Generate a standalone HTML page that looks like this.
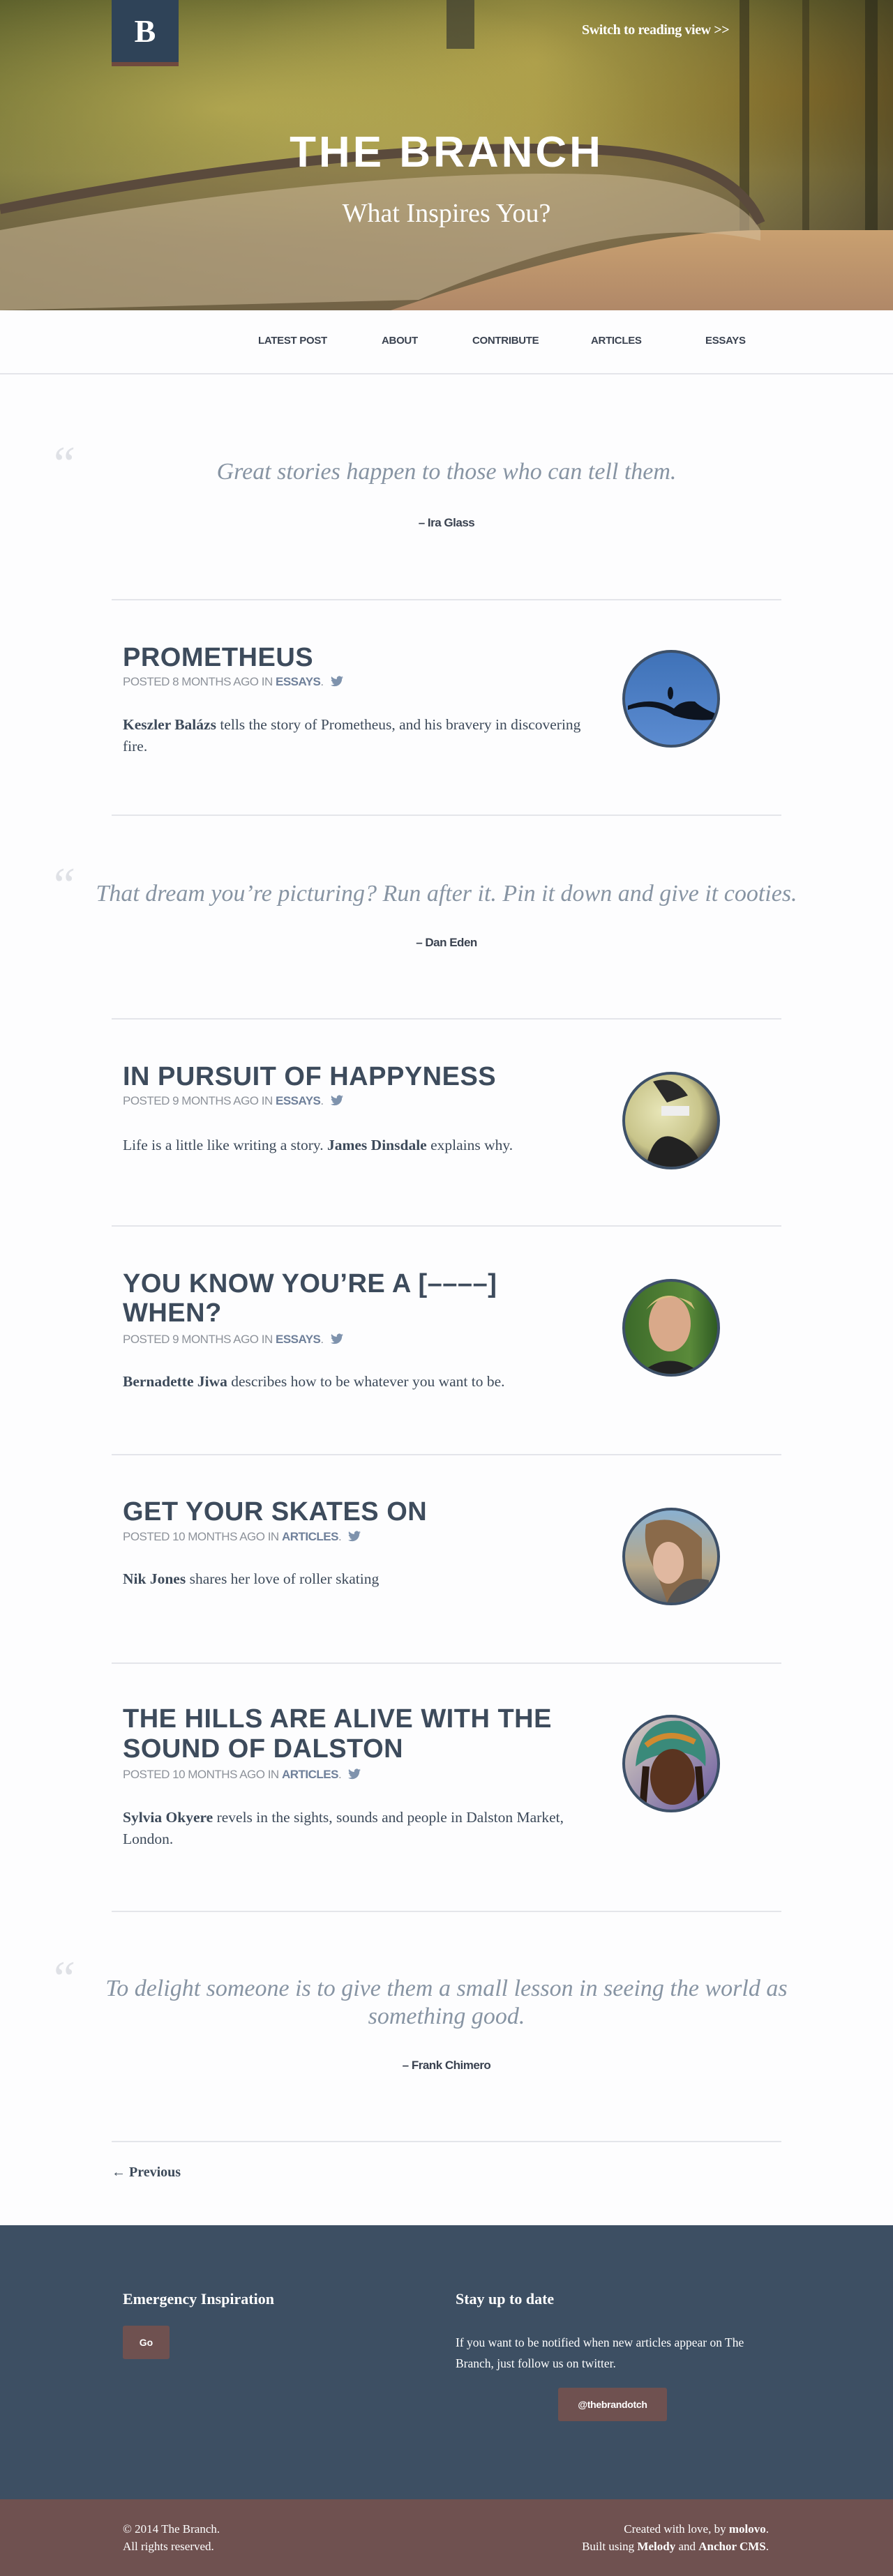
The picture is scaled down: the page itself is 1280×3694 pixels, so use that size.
<!DOCTYPE html>
<html><head><meta charset="utf-8">
<style>
*{margin:0;padding:0;box-sizing:border-box}
body{width:1280px;height:3694px;position:relative;background:#fdfdfe;font-family:"Liberation Serif",serif;color:#3d4a5a;overflow:hidden}
.a{position:absolute}
.hero{left:0;top:0;width:1280px;height:445px;overflow:hidden;
background:radial-gradient(ellipse at 25% 35%,#c9b95a 0%,rgba(180,160,70,0) 45%),radial-gradient(ellipse at 60% 20%,#a89a48 0%,rgba(150,140,60,0) 40%),radial-gradient(ellipse at 90% 30%,#b08a30 0%,rgba(120,100,40,0) 35%),linear-gradient(180deg,#6a6a30 0%,#8f8a42 30%,#a89a58 55%,#8c7a52 80%,#7b6a4c 100%)}
.hr{position:absolute;left:160px;width:960px;height:2px;background:#e4e5ea}
.t{position:absolute;left:176px;font-family:"Liberation Sans",sans-serif;font-weight:bold;font-size:38px;line-height:42px;letter-spacing:0.5px;color:#3d4b5c;text-transform:uppercase}
.m{position:absolute;left:176px;font-family:"Liberation Sans",sans-serif;font-size:17px;line-height:22px;color:#8d929a;letter-spacing:-0.5px}
.m b{color:#6f809a}
.m svg{vertical-align:-2px;margin-left:10px}
.p{position:absolute;left:176px;width:660px;font-size:21.5px;line-height:31px;color:#3d4a5a}
.av{position:absolute;width:140px;height:140px;border-radius:50%;border:4px solid #3d5068;overflow:hidden}
.q{position:absolute;left:140px;width:1000px;text-align:center;font-family:"Liberation Serif",serif;font-style:italic;font-size:34px;line-height:40px;color:#8794a3}
.qm{position:absolute;left:70px;font-family:"Liberation Serif",serif;font-style:italic;font-size:70px;color:#dfe1e6;line-height:60px}
.att{position:absolute;left:0;width:1280px;text-align:center;font-family:"Liberation Sans",sans-serif;font-weight:bold;font-size:17px;color:#3a4250;letter-spacing:-0.5px}
.nav{font-family:"Liberation Sans",sans-serif;font-weight:bold;font-size:15px;color:#3a4250;top:480px;letter-spacing:-0.3px}
</style></head><body>
<div class="a hero">
<svg width="1280" height="445" style="position:absolute;left:0;top:0">
<defs><linearGradient id="dk" x1="0" x2="1"><stop offset="0" stop-color="#4a5326" stop-opacity=".4"/><stop offset=".6" stop-color="#6b6e33" stop-opacity="0"/><stop offset="1" stop-color="#2e2a1a" stop-opacity=".6"/></linearGradient>
<linearGradient id="dk2" x1="0" y1="0" x2="0" y2="1"><stop offset="0" stop-color="#c9a070"/><stop offset="1" stop-color="#b08868"/></linearGradient></defs>
<rect width="1280" height="445" fill="url(#dk)"/>
<rect x="1060" y="0" width="14" height="380" fill="#2f2b1c" opacity=".6"/>
<rect x="1150" y="0" width="10" height="380" fill="#2f2b1c" opacity=".5"/>
<rect x="1240" y="0" width="18" height="400" fill="#2a2a1a" opacity=".6"/>
<rect x="640" y="0" width="40" height="70" fill="#3a3a30" opacity=".7"/>
<path d="M0 300 Q500 200 860 215 Q1050 225 1090 320 L1090 400 L1280 400 L1280 445 L0 445Z" fill="#6d5a44" opacity=".45"/>
<path d="M560 445 Q900 330 1090 330 L1280 330 L1280 445Z" fill="url(#dk2)"/>
<path d="M0 300 Q500 200 860 215 Q1050 225 1090 320" stroke="#5a4a3c" stroke-width="14" fill="none"/>
<path d="M0 330 Q500 240 860 250 Q1050 260 1090 330 L1090 345 Q900 300 600 430 L0 445Z" fill="#d5c2a0" opacity=".5"/>
</svg>
<div class="a" style="left:160px;top:0;width:96px;height:89px;background:#2f4358;color:#fff;font:bold 46px 'Liberation Serif',serif;text-align:center;line-height:89px">B</div>
<div class="a" style="left:160px;top:89px;width:96px;height:6px;background:#6f4a3e"></div>
<div class="a" style="left:834px;top:32px;color:#fff;font:bold 20px 'Liberation Serif',serif;letter-spacing:-0.4px">Switch to reading view &gt;&gt;</div>
<div class="a" style="left:0;top:182px;width:1280px;text-align:center;color:#fff;font:bold 62px 'Liberation Sans',sans-serif;letter-spacing:4px;line-height:74px">THE BRANCH</div>
<div class="a" style="left:0;top:284px;width:1280px;text-align:center;color:#fff;font:38px 'Liberation Serif',serif;line-height:44px">What Inspires You?</div>
</div>
<div class="a" style="left:0;top:535px;width:1280px;height:2px;background:#e4e5ea"></div>
<div class="a nav" style="left:370px">LATEST POST</div>
<div class="a nav" style="left:547px">ABOUT</div>
<div class="a nav" style="left:677px">CONTRIBUTE</div>
<div class="a nav" style="left:847px">ARTICLES</div>
<div class="a nav" style="left:1011px">ESSAYS</div>

<div class="qm" style="top:636px">“</div>
<div class="q" style="top:657px">Great stories happen to those who can tell them.</div>
<div class="att" style="top:740px">– Ira Glass</div>
<div class="hr" style="top:859px"></div>

<div class="t" style="top:922px">Prometheus</div>
<div class="m" style="top:967px">POSTED 8 MONTHS AGO IN <b>ESSAYS</b>.<svg width="18" height="16" viewBox="0 0 24 20"><path fill="#7f93ad" d="M24 2.4a9.8 9.8 0 0 1-2.8.8A4.9 4.9 0 0 0 23.3.4a9.9 9.9 0 0 1-3.1 1.2A4.9 4.9 0 0 0 11.8 6 14 14 0 0 1 1.7.9a4.9 4.9 0 0 0 1.500 6.6A4.9 4.9 0 0 1 1 6.9a4.9 4.9 0 0 0 3.9 4.9 4.9 4.9 0 0 1-2.2.1 4.9 4.9 0 0 0 4.6 3.4A9.9 9.9 0 0 1 0 17.3 14 14 0 0 0 7.5 19.5c9.1 0 14-7.5 14-14v-.6A10 10 0 0 0 24 2.4z"/></svg></div>
<div class="p" style="top:1024px"><b>Keszler Balázs</b> tells the story of Prometheus, and his bravery in discovering fire.</div>
<div class="av" style="left:892px;top:932px;background:linear-gradient(#3f72b8,#5b8bd0)"><svg width="132" height="132"><path d="M4 82 Q40 70 70 90 Q100 100 132 95 L132 88 Q110 80 100 70 Q80 68 70 80 Q40 62 4 76Z" fill="#0d1420"/><ellipse cx="65" cy="58" rx="4" ry="9" fill="#0d1420"/></svg></div>
<div class="hr" style="top:1168px"></div>

<div class="qm" style="top:1240px">“</div>
<div class="q" style="top:1262px;left:110px;width:1060px">That dream you’re picturing? Run after it. Pin it down and give it cooties.</div>
<div class="att" style="top:1342px">– Dan Eden</div>
<div class="hr" style="top:1460px"></div>

<div class="t" style="top:1523px">In Pursuit of Happyness</div>
<div class="m" style="top:1568px">POSTED 9 MONTHS AGO IN <b>ESSAYS</b>.<svg width="18" height="16" viewBox="0 0 24 20"><path fill="#7f93ad" d="M24 2.4a9.8 9.8 0 0 1-2.8.8A4.9 4.9 0 0 0 23.3.4a9.9 9.9 0 0 1-3.1 1.2A4.9 4.9 0 0 0 11.8 6 14 14 0 0 1 1.7.9a4.9 4.9 0 0 0 1.5 6.6A4.9 4.9 0 0 1 1 6.9a4.9 4.9 0 0 0 3.9 4.9 4.9 4.9 0 0 1-2.2.1 4.9 4.9 0 0 0 4.6 3.4A9.9 9.9 0 0 1 0 17.3 14 14 0 0 0 7.5 19.5c9.1 0 14-7.5 14-14v-.6A10 10 0 0 0 24 2.4z"/></svg></div>
<div class="p" style="top:1627px">Life is a little like writing a story. <b>James Dinsdale</b> explains why.</div>
<div class="av" style="left:892px;top:1537px;background:radial-gradient(circle at 40% 40%,#e8e6b8,#c8c48a 50%,#3a3530 80%)"><svg width="132" height="132"><path d="M30 132 Q40 80 70 90 Q100 100 110 132Z" fill="#222"/><rect x="52" y="45" width="40" height="14" fill="#eee"/><path d="M40 10 Q70 0 90 30 L60 40Z" fill="#2a2a2a"/></svg></div>
<div class="hr" style="top:1757px"></div>

<div class="t" style="top:1820px">You know you’re a [––––]</div>
<div class="t" style="top:1862px">When?</div>
<div class="m" style="top:1910px">POSTED 9 MONTHS AGO IN <b>ESSAYS</b>.<svg width="18" height="16" viewBox="0 0 24 20"><path fill="#7f93ad" d="M24 2.4a9.8 9.8 0 0 1-2.8.8A4.9 4.9 0 0 0 23.3.4a9.9 9.9 0 0 1-3.1 1.2A4.9 4.9 0 0 0 11.8 6 14 14 0 0 1 1.7.9a4.9 4.9 0 0 0 1.5 6.6A4.9 4.9 0 0 1 1 6.9a4.9 4.9 0 0 0 3.9 4.9 4.9 4.9 0 0 1-2.2.1 4.9 4.9 0 0 0 4.6 3.4A9.9 9.9 0 0 1 0 17.3 14 14 0 0 0 7.5 19.5c9.1 0 14-7.5 14-14v-.6A10 10 0 0 0 24 2.4z"/></svg></div>
<div class="p" style="top:1966px"><b>Bernadette Jiwa</b> describes how to be whatever you want to be.</div>
<div class="av" style="left:892px;top:1834px;background:linear-gradient(90deg,#3c6a2a,#5a8a3a 70%,#2e5a22)"><svg width="132" height="132"><ellipse cx="64" cy="60" rx="30" ry="40" fill="#d9a98a"/><path d="M30 40 Q60 0 100 40 L95 30 Q60 10 30 40Z" fill="#d8c080"/><path d="M20 132 Q64 95 110 132Z" fill="#222"/></svg></div>
<div class="hr" style="top:2085px"></div>

<div class="t" style="top:2147px">Get your skates on</div>
<div class="m" style="top:2193px">POSTED 10 MONTHS AGO IN <b>ARTICLES</b>.<svg width="18" height="16" viewBox="0 0 24 20"><path fill="#7f93ad" d="M24 2.4a9.8 9.8 0 0 1-2.8.8A4.9 4.9 0 0 0 23.3.4a9.9 9.9 0 0 1-3.1 1.2A4.9 4.9 0 0 0 11.8 6 14 14 0 0 1 1.7.9a4.9 4.9 0 0 0 1.5 6.6A4.9 4.9 0 0 1 1 6.9a4.9 4.9 0 0 0 3.9 4.9 4.9 4.9 0 0 1-2.2.1 4.9 4.9 0 0 0 4.6 3.4A9.9 9.9 0 0 1 0 17.3 14 14 0 0 0 7.5 19.5c9.1 0 14-7.5 14-14v-.6A10 10 0 0 0 24 2.4z"/></svg></div>
<div class="p" style="top:2249px"><b>Nik Jones</b> shares her love of roller skating</div>
<div class="av" style="left:892px;top:2162px;background:linear-gradient(#8ab0d0,#b8a888 60%,#6a6a6a)"><svg width="132" height="132"><path d="M30 20 Q70 0 110 40 L110 132 L60 132 Q50 100 40 80 Q25 50 30 20Z" fill="#8a6a4a"/><ellipse cx="62" cy="75" rx="22" ry="30" fill="#e0b8a0"/><path d="M60 132 Q80 90 120 100 L120 132Z" fill="#555"/></svg></div>
<div class="hr" style="top:2384px"></div>

<div class="t" style="top:2444px">The hills are alive with the</div>
<div class="t" style="top:2487px">sound of Dalston</div>
<div class="m" style="top:2534px">POSTED 10 MONTHS AGO IN <b>ARTICLES</b>.<svg width="18" height="16" viewBox="0 0 24 20"><path fill="#7f93ad" d="M24 2.4a9.8 9.8 0 0 1-2.8.8A4.9 4.9 0 0 0 23.3.4a9.9 9.9 0 0 1-3.1 1.2A4.9 4.9 0 0 0 11.8 6 14 14 0 0 1 1.7.9a4.9 4.9 0 0 0 1.5 6.6A4.9 4.9 0 0 1 1 6.9a4.9 4.9 0 0 0 3.9 4.9 4.9 4.9 0 0 1-2.2.1 4.9 4.9 0 0 0 4.6 3.4A9.9 9.9 0 0 1 0 17.3 14 14 0 0 0 7.5 19.5c9.1 0 14-7.5 14-14v-.6A10 10 0 0 0 24 2.4z"/></svg></div>
<div class="p" style="top:2591px"><b>Sylvia Okyere</b> revels in the sights, sounds and people in Dalston Market, London.</div>
<div class="av" style="left:892px;top:2459px;background:linear-gradient(135deg,#d8d0c0,#6a5aa0)"><svg width="132" height="132"><path d="M15 70 Q20 0 80 5 Q120 20 115 70 Q90 35 30 60Z" fill="#3a8a7a"/><path d="M30 40 Q60 15 100 35" stroke="#d08a30" stroke-width="8" fill="none"/><ellipse cx="68" cy="85" rx="32" ry="40" fill="#5a3420"/><path d="M30 70 L25 132 M105 70 L110 132" stroke="#2a1a12" stroke-width="10"/></svg></div>
<div class="hr" style="top:2740px"></div>

<div class="qm" style="top:2808px">“</div>
<div class="q" style="top:2832px">To delight someone is to give them a small lesson in seeing the world as something good.</div>
<div class="att" style="top:2952px">– Frank Chimero</div>
<div class="hr" style="top:3070px"></div>
<div class="a" style="left:160px;top:3104px;font:bold 20px 'Liberation Serif',serif;color:#3d4a5a">← Previous</div>

<div class="a" style="left:0;top:3191px;width:1280px;height:393px;background:#3d4f63"></div>
<div class="a" style="left:176px;top:3284px;color:#fff;font:bold 22px 'Liberation Serif',serif">Emergency Inspiration</div>
<div class="a" style="left:176px;top:3335px;width:67px;height:48px;background:#6f5150;border-radius:3px;color:#fff;font:bold 14px 'Liberation Sans',sans-serif;text-align:center;line-height:48px">Go</div>
<div class="a" style="left:653px;top:3284px;color:#fff;font:bold 22px 'Liberation Serif',serif">Stay up to date</div>
<div class="a" style="left:653px;top:3344px;width:440px;color:#fff;font:17.5px/30px 'Liberation Serif',serif">If you want to be notified when new articles appear on The Branch, just follow us on twitter.</div>
<div class="a" style="left:800px;top:3424px;width:156px;height:48px;background:#6f5150;border-radius:3px;color:#fff;font:bold 14px 'Liberation Sans',sans-serif;text-align:center;line-height:48px;letter-spacing:-0.3px">@thebrandotch</div>

<div class="a" style="left:0;top:3584px;width:1280px;height:110px;background:#6f5150"></div>
<div class="a" style="left:176px;top:3614px;color:#fff;font:17px/25px 'Liberation Serif',serif">© 2014 The Branch.<br>All rights reserved.</div>
<div class="a" style="left:700px;top:3614px;width:402px;text-align:right;color:#fff;font:17px/25px 'Liberation Serif',serif">Created with love, by <b>molovo</b>.<br>Built using <b>Melody</b> and <b>Anchor CMS</b>.</div>
</body></html>
